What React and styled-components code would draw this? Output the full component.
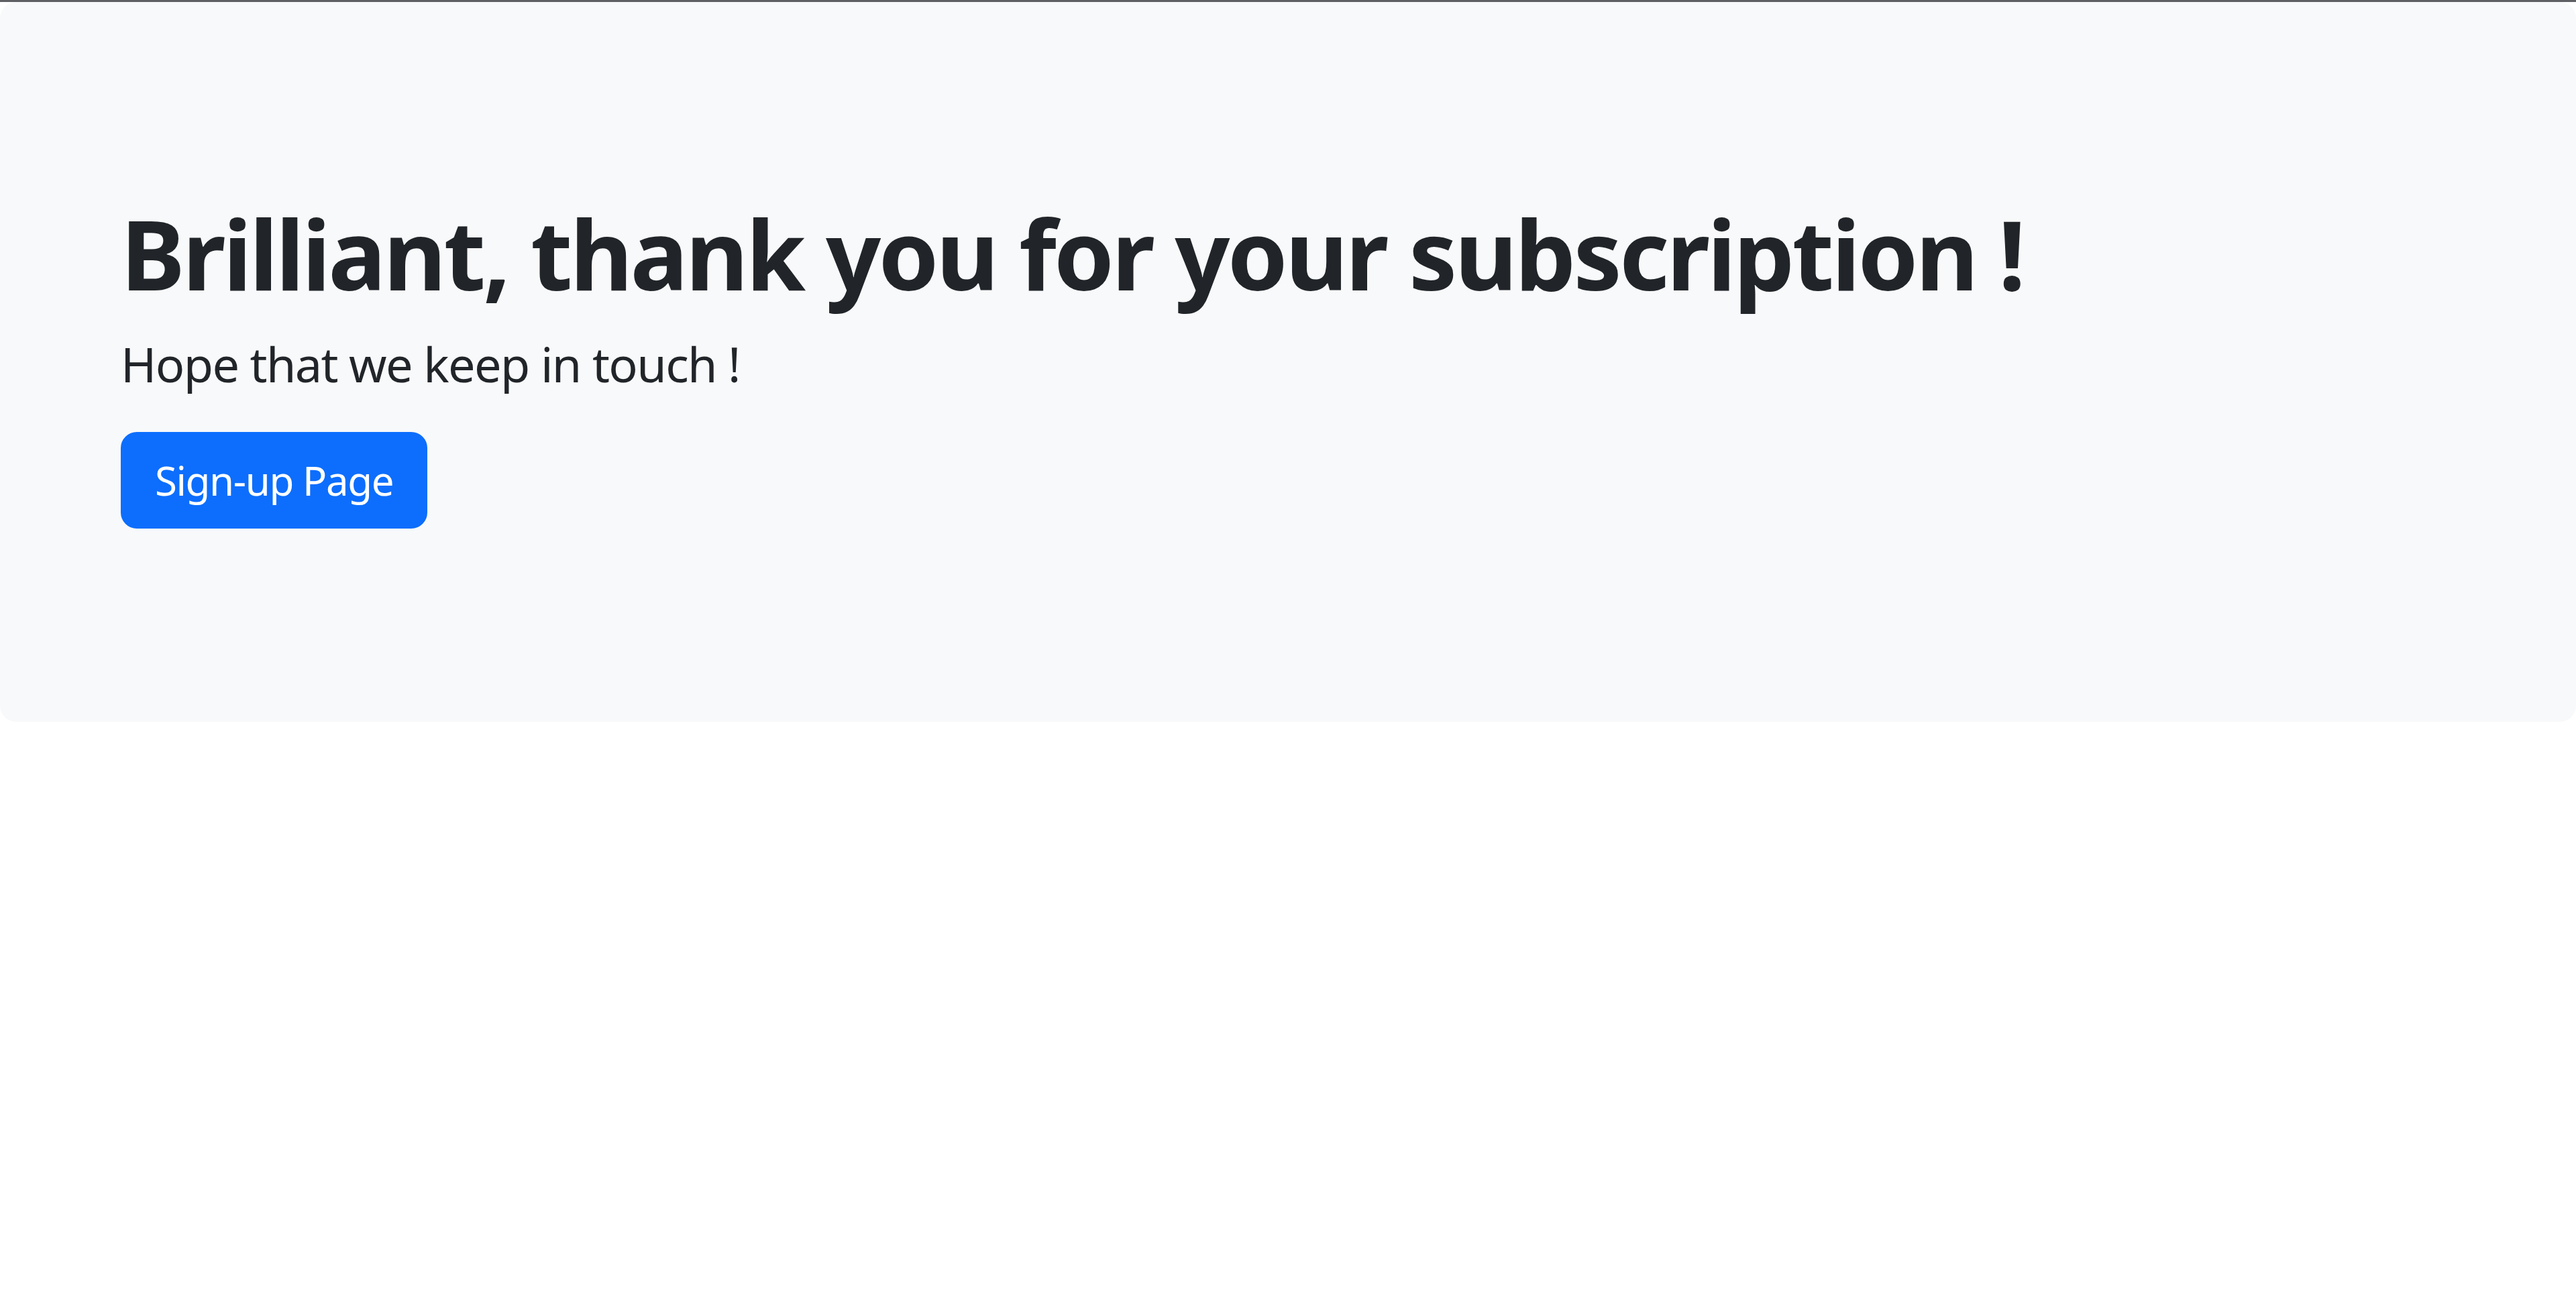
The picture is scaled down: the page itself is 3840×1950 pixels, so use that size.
import React from "react";
import styled, { createGlobalStyle } from "styled-components";

const GlobalStyle = createGlobalStyle`
  * {
    box-sizing: border-box;
  }
  body {
    margin: 0;
    background: #fff;
    color: #212529;
    font-family: "Noto Sans", "Open Sans", sans-serif;
  }
`;

const Page = styled.main`
  border-top: 3px solid #5f6063;
`;

const Jumbotron = styled.section`
  padding: 144px;
  background-color: #f8f9fa;
  border-radius: 24px;
`;

const Container = styled.div`
  padding: 144px 36px;
`;

const Title = styled.h1`
  margin: 0 0 24px;
  font-size: 144px;
  font-weight: 700;
  line-height: 1.2;
  letter-spacing: -3.8px;
`;

const Lead = styled.p`
  margin: 0 0 48px;
  font-size: 72px;
  font-weight: 400;
  line-height: 1.5;
  letter-spacing: -1.6px;
`;

const Button = styled.button`
  display: inline-block;
  padding: 24px 48px;
  font-family: inherit;
  font-size: 60px;
  line-height: 1.5;
  letter-spacing: -1.4px;
  color: #fff;
  background-color: #0d6efd;
  border: 3px solid #0d6efd;
  border-radius: 24px;
  cursor: pointer;
`;

const App = () => {
  return (
    <>
      <GlobalStyle />
      <Page>
        <Jumbotron>
          <Container>
            <Title>Brilliant, thank you for your subscription !</Title>
            <Lead>Hope that we keep in touch !</Lead>
            <Button type="button">Sign-up Page</Button>
          </Container>
        </Jumbotron>
      </Page>
    </>
  );
};

export default App;
